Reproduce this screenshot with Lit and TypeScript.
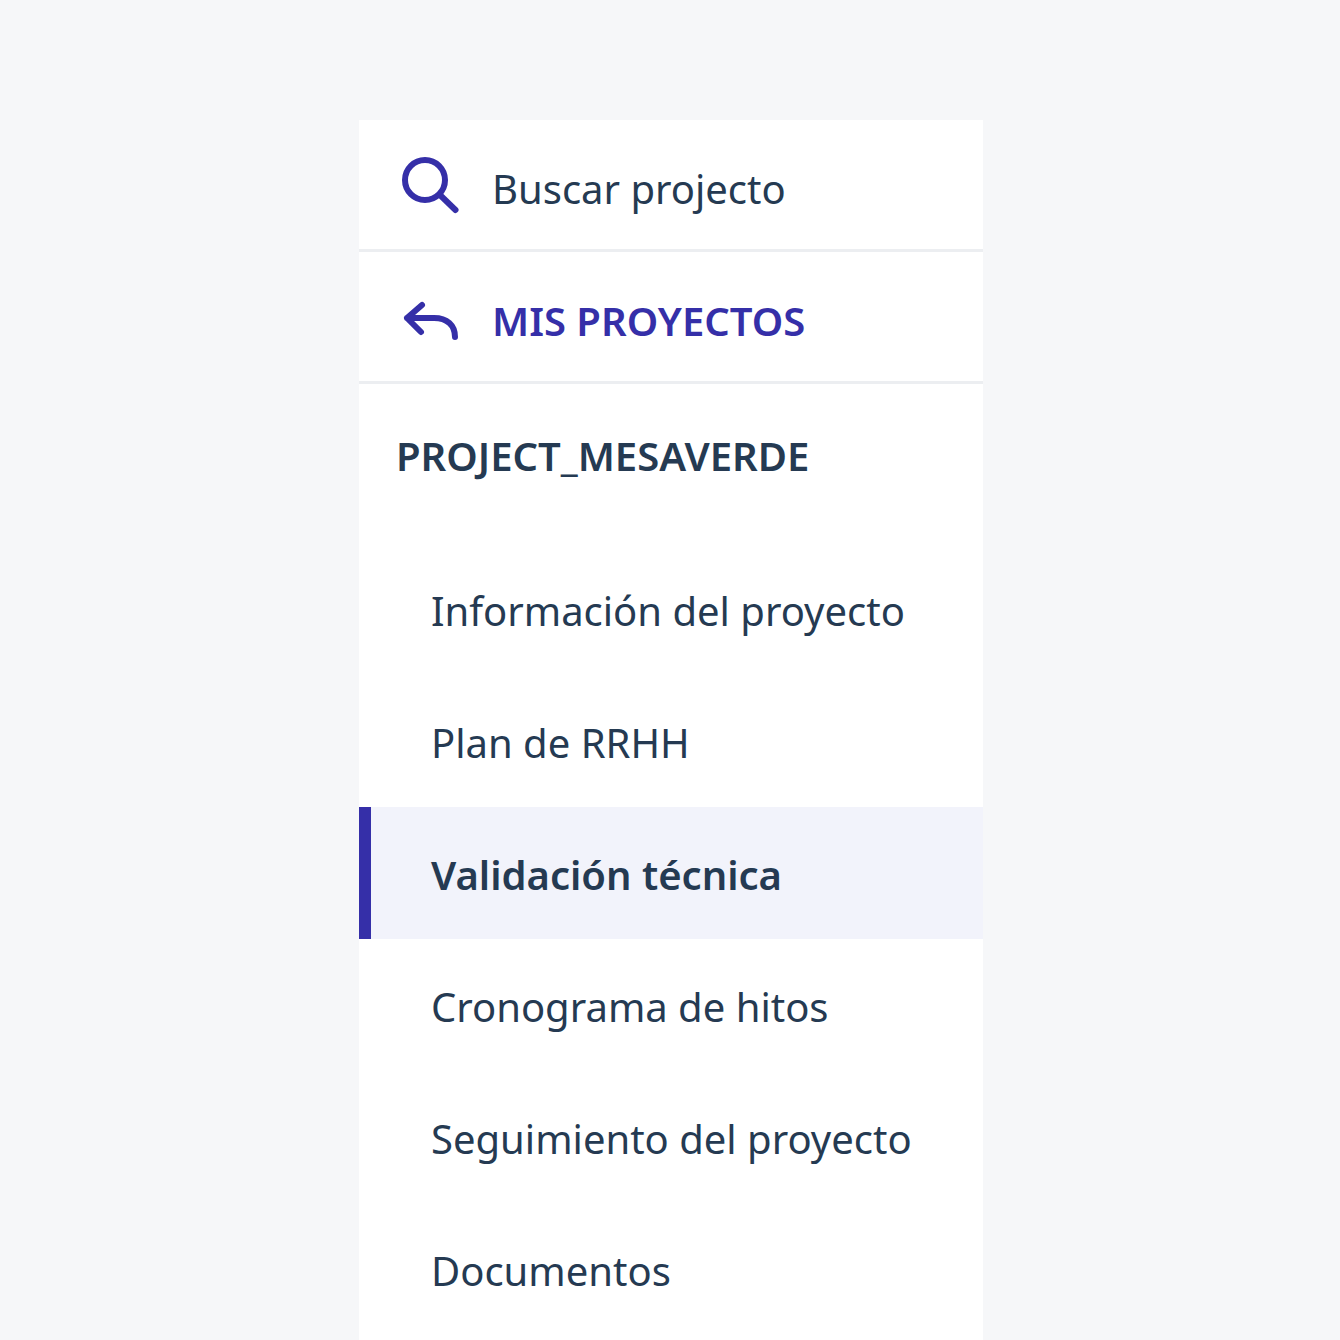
import { LitElement, css, html } from 'lit';
import { customElement } from 'lit/decorators.js';

const items = [
    'Información del proyecto',
    'Plan de RRHH',
    'Validación técnica',
    'Cronograma de hitos',
    'Seguimiento del proyecto',
    'Documentos',
];
const activeItem = 'Validación técnica';

@customElement('app-root')
export class AppRoot extends LitElement {
    static styles = css`
        :host {
            display: block;
            height: 1340px;
            overflow: hidden;
            background: #f6f7f9;
            font-family: 'Noto Sans', 'Open Sans', sans-serif;
            color: #253a52;
        }

        .panel {
            width: 624px;
            height: 1220px;
            margin: 0 auto;
            position: relative;
            top: 120px;
            left: 1px;
            background: #fff;
        }

        .row {
            display: flex;
            align-items: center;
            height: 129px;
            padding-left: 42px;
            border-bottom: 3px solid #eceef1;
            font-size: 40px;
        }

        .row span {
            padding-top: 8px;
        }

        .row svg {
            width: 60px;
            height: 60px;
            margin-right: 31px;
            flex: none;
            fill: none;
            stroke: #352fa8;
            stroke-width: 6;
            stroke-linecap: round;
            stroke-linejoin: round;
        }

        .back {
            color: #352fa8;
            font-weight: 600;
        }

        .title {
            padding: 46px 0 0 37px;
            height: 111px;
            box-sizing: border-box;
            line-height: 52px;
            font-size: 40px;
            font-weight: 600;
        }

        .menu {
            list-style: none;
            margin: 0;
            padding: 48px 0 0;
        }

        .menu li {
            height: 132px;
            box-sizing: border-box;
            padding-top: 2px;
            display: flex;
            align-items: center;
            padding-left: 72px;
            font-size: 40px;
        }

        .menu li.active {
            background: #f2f3fb;
            border-left: 12px solid #352fa8;
            padding-left: 60px;
            font-weight: 600;
        }
    `;

    render() {
        return html`<div class="panel">
            <div class="row">
                <svg viewBox="0 0 60 60"><circle cx="24" cy="25" r="20"></circle><path d="M39 40L54.5 55"></path></svg>
                <span>Buscar projecto</span>
            </div>
            <div class="row back">
                <svg viewBox="0 0 60 60"><path d="M21 18L6 31L20 45M6 31H33C46 31 54 38 54 50"></path></svg>
                <span>MIS PROYECTOS</span>
            </div>
            <div class="title">PROJECT_MESAVERDE</div>
            <ul class="menu">
                ${items.map(i => html`<li class="${i === activeItem ? 'active' : ''}">${i}</li>`)}
            </ul>
        </div>`;
    }
}
